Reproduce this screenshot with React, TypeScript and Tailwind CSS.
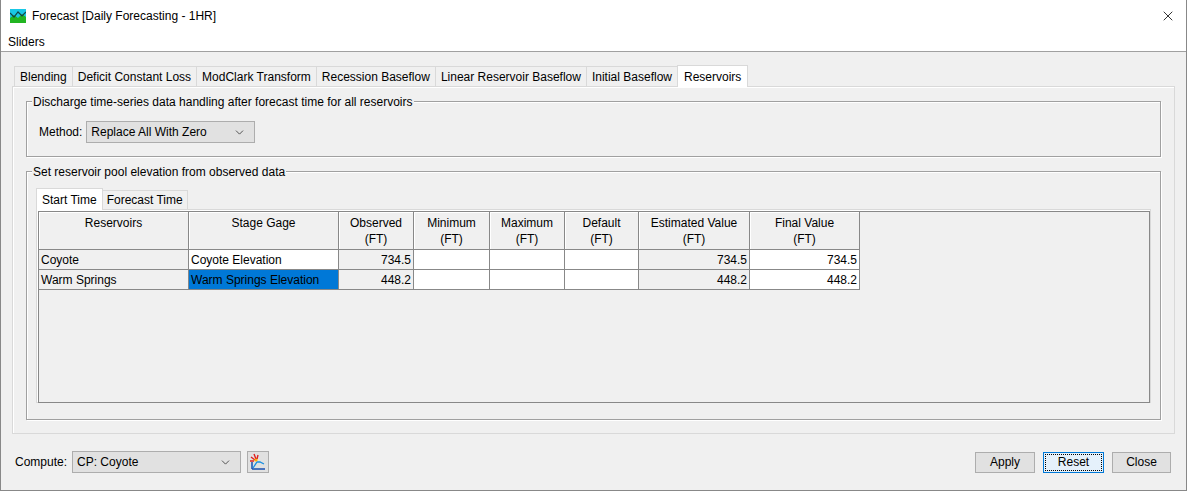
import { X, ChevronDown } from "lucide-react";

const tabs = ["Blending", "Deficit Constant Loss", "ModClark Transform", "Recession Baseflow", "Linear Reservoir Baseflow", "Initial Baseflow"];

const cols = [
  { w: "w-[150px]", a: "Reservoirs", b: "" },
  { w: "w-[150px]", a: "Stage Gage", b: "" },
  { w: "w-[75px]", a: "Observed", b: "(FT)" },
  { w: "w-[76px]", a: "Minimum", b: "(FT)" },
  { w: "w-[75px]", a: "Maximum", b: "(FT)" },
  { w: "w-[74px]", a: "Default", b: "(FT)" },
  { w: "w-[111px]", a: "Estimated Value", b: "(FT)" },
  { w: "w-[110px]", a: "Final Value", b: "(FT)" },
];

const rows = [
  { name: "Coyote", gage: "Coyote Elevation", obs: "734.5", sel: false },
  { name: "Warm Springs", gage: "Warm Springs Elevation", obs: "448.2", sel: true },
];

function Select({ value, w }: { value: string; w: string }) {
  return (
    <div className={`${w} h-[22px] border border-[#adadad] bg-[#e1e1e1] flex items-center justify-between pl-1 pr-2`}>
      <span>{value}</span>
      <ChevronDown size={13} strokeWidth={1.5} className="text-[#333]" />
    </div>
  );
}

export default function App() {
  return (
    <div className="w-[1187px] h-[491px] bg-[#f0f0f0] border border-[#888] border-t-0 flex flex-col text-[12px] text-black overflow-hidden" style={{ fontFamily: "'Liberation Sans', Arial, sans-serif" }}>
      <div className="h-[32px] bg-white flex items-center pl-[9px] pr-[10px]">
        <svg width="16" height="14" viewBox="0 0 16 14" className="mr-[6px]">
          <rect width="16" height="14" fill="#19c8e6" />
          <path d="M0 9 L4 6 L8 9 L12 5 L16 8 L16 14 L0 14Z" fill="#22b522" />
          <path d="M0 4 L4 8 L8 3 L12 7 L16 3" stroke="#144" strokeWidth="1.2" fill="none" />
        </svg>
        <span>Forecast [Daily Forecasting - 1HR]</span>
        <X size={16} strokeWidth={1.2} className="ml-auto" />
      </div>
      <div className="h-[20px] bg-white flex items-center pl-[7px] border-b border-[#a0a0a0]">Sliders</div>

      <div className="flex flex-col px-[11px] pt-[12px]">
        <div className="flex items-end h-[22px] pl-[2px]">
          {tabs.map((t) => (
            <div key={t} className="h-[20px] px-[5px] flex items-center bg-[#f0f0f0] border border-[#d9d9d9] border-b-0 -mr-px">{t}</div>
          ))}
          <div className="h-[22px] px-[6px] flex items-center bg-white border border-[#d9d9d9] border-b-0 relative z-10 -mb-px">Reservoirs</div>
        </div>
        <div className="h-[348px] border border-[#d9d9d9] bg-[#f0f0f0] px-[13px] pt-[14px] flex flex-col gap-[14px]" style={{ boxShadow: "inset 1px 1px 0 #fff" }}>
          <div className="relative h-[56px] border border-[#a0a0a0]" style={{ boxShadow: "inset 1px 1px 0 #fff, 1px 1px 0 #fff" }}>
            <span className="absolute -top-[9px] left-[5px] bg-[#f0f0f0] px-px">Discharge time-series data handling after forecast time for all reservoirs</span>
            <div className="flex items-center gap-[4px] pl-[12px] pt-[19px]">
              <span>Method:</span>
              <Select value="Replace All With Zero" w="w-[169px]" />
            </div>
          </div>
          <div className="relative h-[249px] border border-[#a0a0a0] px-[9px] pt-[15px]" style={{ boxShadow: "inset 1px 1px 0 #fff, 1px 1px 0 #fff" }}>
            <span className="absolute -top-[9px] left-[5px] bg-[#f0f0f0] px-px">Set reservoir pool elevation from observed data</span>
            <div className="flex items-end h-[22px]">
              <div className="h-[22px] px-[5px] flex items-center bg-white border border-[#d9d9d9] border-b-0 relative z-10 -mb-px">Start Time</div>
              <div className="h-[19px] px-[4px] flex items-center border border-[#d9d9d9] border-b-0 border-l-0">Forecast Time</div>
            </div>
            <div className="h-[194px] border border-[#d9d9d9] bg-white pt-[1px] pl-px">
              <div className="h-[192px] border border-[#888] bg-[#f0f0f0]">
                <div className="flex">
                  {cols.map((c) => (
                    <div key={c.a} className={`${c.w} h-[38px] border-r border-b border-[#888] flex flex-col items-center pt-[3px] leading-[16px]`} style={{ boxShadow: "inset 1px 1px 0 #fff" }}>
                      <span>{c.a}</span>
                      <span>{c.b}</span>
                    </div>
                  ))}
                </div>
                {rows.map((r) => (
                  <div key={r.name} className="flex h-[20px]">
                    <div className="w-[150px] border-r border-b border-[#888] flex items-center pl-[2px]">{r.name}</div>
                    <div className={`w-[150px] border-r border-b border-[#888] flex items-center pl-[2px] ${r.sel ? "bg-[#0078d7]" : "bg-white"}`}>{r.gage}</div>
                    <div className="w-[75px] border-r border-b border-[#888] flex items-center justify-end pr-[2px]">{r.obs}</div>
                    <div className="w-[76px] border-r border-b border-[#888] bg-white" />
                    <div className="w-[75px] border-r border-b border-[#888] bg-white" />
                    <div className="w-[74px] border-r border-b border-[#888] bg-white" />
                    <div className="w-[111px] border-r border-b border-[#888] flex items-center justify-end pr-[2px]">{r.obs}</div>
                    <div className="w-[110px] border-r border-b border-[#888] bg-white flex items-center justify-end pr-[2px]">{r.obs}</div>
                  </div>
                ))}
              </div>
            </div>
          </div>
        </div>
      </div>

      <div className="flex items-center pl-[14px] pr-[15px] mt-[17px]">
        <span className="mr-[5px]">Compute:</span>
        <Select value="CP: Coyote" w="w-[169px]" />
        <div className="ml-[6px] w-[22px] h-[22px] border border-[#adadad] bg-[#e1e1e1] flex items-center justify-center">
          <svg width="18" height="18" viewBox="0 0 18 18">
            <path d="M3 16 L3 9 M3 16 L16 16" stroke="#1a4fb0" strokeWidth="1.5" />
            <path d="M4 15 L8 9 L11 9 L15 11" stroke="#1a8fe0" strokeWidth="1.3" fill="none" />
            <path d="M2 4 L6 7 M5 1 L7 6 M9 2 L8 6 M1 8 L5 8" stroke="#e02020" strokeWidth="1.4" />
            <circle cx="7" cy="7" r="1.6" fill="#ffb000" />
          </svg>
        </div>
        <div className="ml-auto flex gap-[8px]">
          <div className="w-[60px] h-[21px] border border-[#adadad] bg-[#e1e1e1] flex items-center justify-center">Apply</div>
          <div className="w-[61px] h-[21px] border border-[#0078d7] bg-[#e5f1fb] flex items-center justify-center p-px">
            <div className="w-full h-full border border-dotted border-black flex items-center justify-center">Reset</div>
          </div>
          <div className="w-[59px] h-[21px] border border-[#adadad] bg-[#e1e1e1] flex items-center justify-center">Close</div>
        </div>
      </div>
    </div>
  );
}
